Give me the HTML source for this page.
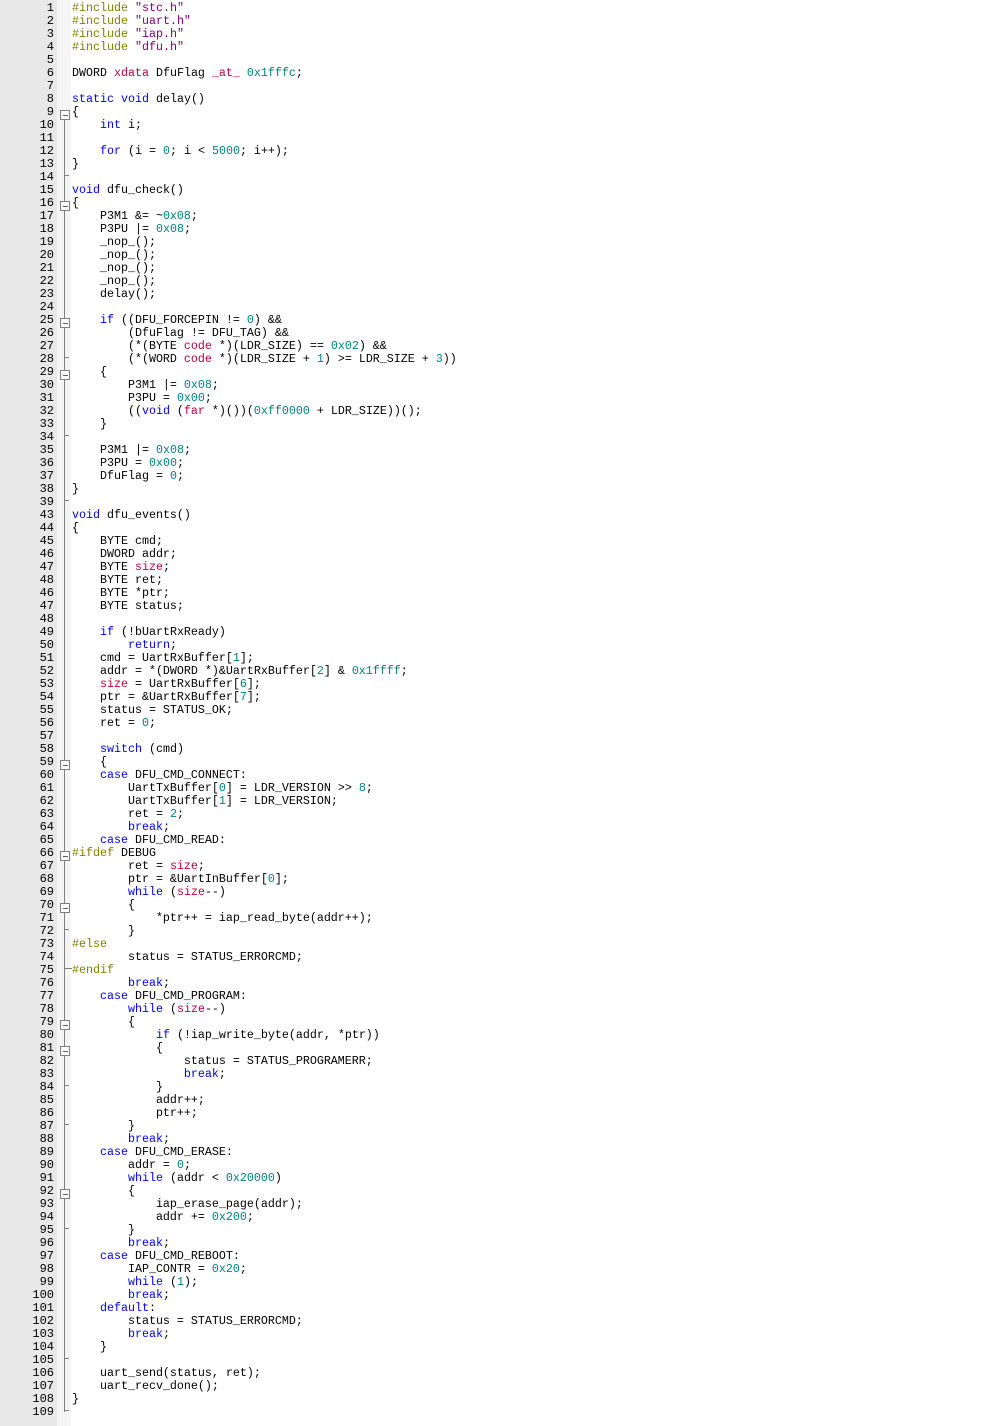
<!DOCTYPE html>
<html><head><meta charset="utf-8">
<style>
html,body{margin:0;padding:0;background:#fff;width:1003px;height:1426px;overflow:hidden}
#g{position:absolute;left:0;top:0;width:57px;height:1426px;background:#e8e8e8}
#f{position:absolute;left:57px;top:0;width:14px;height:1426px;background:#f5f5f5}
#code{position:absolute;left:0;top:2px;font-family:"Liberation Mono",monospace;font-size:11.67px;line-height:13px;color:#000}
.r{height:13px;white-space:pre;position:relative}
.ln{position:absolute;left:0;width:54px;text-align:right;color:#000;font-size:12px}
.t{position:absolute;left:72px}
.k{color:#0000ff}.n{color:#008080}.p{color:#808000}.s{color:#800080}.x{color:#c0003c}
#vl{position:absolute;left:64px;top:110px;width:1px;height:1302px;background:#808080;z-index:2}
.b{position:absolute;left:60px;width:8px;height:8px;border:1px solid #808080;background:#fff;z-index:3}
.b:after{content:"";position:absolute;left:2px;top:4px;width:5px;height:1px;background:#606060}
.tk{position:absolute;left:64px;width:5px;height:1px;background:#808080;z-index:2}
</style></head><body>
<div id="g"></div><div id="f"></div><div id="vl"></div>
<div class="b" style="top:110px"></div>
<div class="b" style="top:201px"></div>
<div class="b" style="top:318px"></div>
<div class="b" style="top:370px"></div>
<div class="b" style="top:760px"></div>
<div class="b" style="top:851px"></div>
<div class="b" style="top:903px"></div>
<div class="b" style="top:1020px"></div>
<div class="b" style="top:1046px"></div>
<div class="b" style="top:1189px"></div>
<div class="tk" style="top:175px"></div>
<div class="tk" style="top:357px"></div>
<div class="tk" style="top:435px"></div>
<div class="tk" style="top:500px"></div>
<div class="tk" style="top:929px"></div>
<div class="tk" style="top:968px;width:8px"></div>
<div class="tk" style="top:1085px"></div>
<div class="tk" style="top:1124px"></div>
<div class="tk" style="top:1228px"></div>
<div class="tk" style="top:1358px"></div>
<div class="tk" style="top:1410px"></div>
<div id="code">
<div class="r"><span class="ln">1</span><span class="t"><span class="p">#include</span> <span class="s">"stc.h"</span></span></div>
<div class="r"><span class="ln">2</span><span class="t"><span class="p">#include</span> <span class="s">"uart.h"</span></span></div>
<div class="r"><span class="ln">3</span><span class="t"><span class="p">#include</span> <span class="s">"iap.h"</span></span></div>
<div class="r"><span class="ln">4</span><span class="t"><span class="p">#include</span> <span class="s">"dfu.h"</span></span></div>
<div class="r"><span class="ln">5</span></div>
<div class="r"><span class="ln">6</span><span class="t">DWORD <span class="x">xdata</span> DfuFlag <span class="x">_at_</span> <span class="n">0x1fffc</span>;</span></div>
<div class="r"><span class="ln">7</span></div>
<div class="r"><span class="ln">8</span><span class="t"><span class="k">static</span> <span class="k">void</span> delay()</span></div>
<div class="r"><span class="ln">9</span><span class="t">{</span></div>
<div class="r"><span class="ln">10</span><span class="t">    <span class="k">int</span> i;</span></div>
<div class="r"><span class="ln">11</span></div>
<div class="r"><span class="ln">12</span><span class="t">    <span class="k">for</span> (i = <span class="n">0</span>; i &lt; <span class="n">5000</span>; i++);</span></div>
<div class="r"><span class="ln">13</span><span class="t">}</span></div>
<div class="r"><span class="ln">14</span></div>
<div class="r"><span class="ln">15</span><span class="t"><span class="k">void</span> dfu_check()</span></div>
<div class="r"><span class="ln">16</span><span class="t">{</span></div>
<div class="r"><span class="ln">17</span><span class="t">    P3M1 &amp;= ~<span class="n">0x08</span>;</span></div>
<div class="r"><span class="ln">18</span><span class="t">    P3PU |= <span class="n">0x08</span>;</span></div>
<div class="r"><span class="ln">19</span><span class="t">    _nop_();</span></div>
<div class="r"><span class="ln">20</span><span class="t">    _nop_();</span></div>
<div class="r"><span class="ln">21</span><span class="t">    _nop_();</span></div>
<div class="r"><span class="ln">22</span><span class="t">    _nop_();</span></div>
<div class="r"><span class="ln">23</span><span class="t">    delay();</span></div>
<div class="r"><span class="ln">24</span></div>
<div class="r"><span class="ln">25</span><span class="t">    <span class="k">if</span> ((DFU_FORCEPIN != <span class="n">0</span>) &amp;&amp;</span></div>
<div class="r"><span class="ln">26</span><span class="t">        (DfuFlag != DFU_TAG) &amp;&amp;</span></div>
<div class="r"><span class="ln">27</span><span class="t">        (*(BYTE <span class="x">code</span> *)(LDR_SIZE) == <span class="n">0x02</span>) &amp;&amp;</span></div>
<div class="r"><span class="ln">28</span><span class="t">        (*(WORD <span class="x">code</span> *)(LDR_SIZE + <span class="n">1</span>) &gt;= LDR_SIZE + <span class="n">3</span>))</span></div>
<div class="r"><span class="ln">29</span><span class="t">    {</span></div>
<div class="r"><span class="ln">30</span><span class="t">        P3M1 |= <span class="n">0x08</span>;</span></div>
<div class="r"><span class="ln">31</span><span class="t">        P3PU = <span class="n">0x00</span>;</span></div>
<div class="r"><span class="ln">32</span><span class="t">        ((<span class="k">void</span> (<span class="x">far</span> *)())(<span class="n">0xff0000</span> + LDR_SIZE))();</span></div>
<div class="r"><span class="ln">33</span><span class="t">    }</span></div>
<div class="r"><span class="ln">34</span></div>
<div class="r"><span class="ln">35</span><span class="t">    P3M1 |= <span class="n">0x08</span>;</span></div>
<div class="r"><span class="ln">36</span><span class="t">    P3PU = <span class="n">0x00</span>;</span></div>
<div class="r"><span class="ln">37</span><span class="t">    DfuFlag = <span class="n">0</span>;</span></div>
<div class="r"><span class="ln">38</span><span class="t">}</span></div>
<div class="r"><span class="ln">39</span></div>
<div class="r"><span class="ln">43</span><span class="t"><span class="k">void</span> dfu_events()</span></div>
<div class="r"><span class="ln">44</span><span class="t">{</span></div>
<div class="r"><span class="ln">45</span><span class="t">    BYTE cmd;</span></div>
<div class="r"><span class="ln">46</span><span class="t">    DWORD addr;</span></div>
<div class="r"><span class="ln">47</span><span class="t">    BYTE <span class="x">size</span>;</span></div>
<div class="r"><span class="ln">48</span><span class="t">    BYTE ret;</span></div>
<div class="r"><span class="ln">46</span><span class="t">    BYTE *ptr;</span></div>
<div class="r"><span class="ln">47</span><span class="t">    BYTE status;</span></div>
<div class="r"><span class="ln">48</span></div>
<div class="r"><span class="ln">49</span><span class="t">    <span class="k">if</span> (!bUartRxReady)</span></div>
<div class="r"><span class="ln">50</span><span class="t">        <span class="k">return</span>;</span></div>
<div class="r"><span class="ln">51</span><span class="t">    cmd = UartRxBuffer[<span class="n">1</span>];</span></div>
<div class="r"><span class="ln">52</span><span class="t">    addr = *(DWORD *)&amp;UartRxBuffer[<span class="n">2</span>] &amp; <span class="n">0x1ffff</span>;</span></div>
<div class="r"><span class="ln">53</span><span class="t">    <span class="x">size</span> = UartRxBuffer[<span class="n">6</span>];</span></div>
<div class="r"><span class="ln">54</span><span class="t">    ptr = &amp;UartRxBuffer[<span class="n">7</span>];</span></div>
<div class="r"><span class="ln">55</span><span class="t">    status = STATUS_OK;</span></div>
<div class="r"><span class="ln">56</span><span class="t">    ret = <span class="n">0</span>;</span></div>
<div class="r"><span class="ln">57</span></div>
<div class="r"><span class="ln">58</span><span class="t">    <span class="k">switch</span> (cmd)</span></div>
<div class="r"><span class="ln">59</span><span class="t">    {</span></div>
<div class="r"><span class="ln">60</span><span class="t">    <span class="k">case</span> DFU_CMD_CONNECT:</span></div>
<div class="r"><span class="ln">61</span><span class="t">        UartTxBuffer[<span class="n">0</span>] = LDR_VERSION &gt;&gt; <span class="n">8</span>;</span></div>
<div class="r"><span class="ln">62</span><span class="t">        UartTxBuffer[<span class="n">1</span>] = LDR_VERSION;</span></div>
<div class="r"><span class="ln">63</span><span class="t">        ret = <span class="n">2</span>;</span></div>
<div class="r"><span class="ln">64</span><span class="t">        <span class="k">break</span>;</span></div>
<div class="r"><span class="ln">65</span><span class="t">    <span class="k">case</span> DFU_CMD_READ:</span></div>
<div class="r"><span class="ln">66</span><span class="t"><span class="p">#ifdef</span> DEBUG</span></div>
<div class="r"><span class="ln">67</span><span class="t">        ret = <span class="x">size</span>;</span></div>
<div class="r"><span class="ln">68</span><span class="t">        ptr = &amp;UartInBuffer[<span class="n">0</span>];</span></div>
<div class="r"><span class="ln">69</span><span class="t">        <span class="k">while</span> (<span class="x">size</span>--)</span></div>
<div class="r"><span class="ln">70</span><span class="t">        {</span></div>
<div class="r"><span class="ln">71</span><span class="t">            *ptr++ = iap_read_byte(addr++);</span></div>
<div class="r"><span class="ln">72</span><span class="t">        }</span></div>
<div class="r"><span class="ln">73</span><span class="t"><span class="p">#else</span></span></div>
<div class="r"><span class="ln">74</span><span class="t">        status = STATUS_ERRORCMD;</span></div>
<div class="r"><span class="ln">75</span><span class="t"><span class="p">#endif</span></span></div>
<div class="r"><span class="ln">76</span><span class="t">        <span class="k">break</span>;</span></div>
<div class="r"><span class="ln">77</span><span class="t">    <span class="k">case</span> DFU_CMD_PROGRAM:</span></div>
<div class="r"><span class="ln">78</span><span class="t">        <span class="k">while</span> (<span class="x">size</span>--)</span></div>
<div class="r"><span class="ln">79</span><span class="t">        {</span></div>
<div class="r"><span class="ln">80</span><span class="t">            <span class="k">if</span> (!iap_write_byte(addr, *ptr))</span></div>
<div class="r"><span class="ln">81</span><span class="t">            {</span></div>
<div class="r"><span class="ln">82</span><span class="t">                status = STATUS_PROGRAMERR;</span></div>
<div class="r"><span class="ln">83</span><span class="t">                <span class="k">break</span>;</span></div>
<div class="r"><span class="ln">84</span><span class="t">            }</span></div>
<div class="r"><span class="ln">85</span><span class="t">            addr++;</span></div>
<div class="r"><span class="ln">86</span><span class="t">            ptr++;</span></div>
<div class="r"><span class="ln">87</span><span class="t">        }</span></div>
<div class="r"><span class="ln">88</span><span class="t">        <span class="k">break</span>;</span></div>
<div class="r"><span class="ln">89</span><span class="t">    <span class="k">case</span> DFU_CMD_ERASE:</span></div>
<div class="r"><span class="ln">90</span><span class="t">        addr = <span class="n">0</span>;</span></div>
<div class="r"><span class="ln">91</span><span class="t">        <span class="k">while</span> (addr &lt; <span class="n">0x20000</span>)</span></div>
<div class="r"><span class="ln">92</span><span class="t">        {</span></div>
<div class="r"><span class="ln">93</span><span class="t">            iap_erase_page(addr);</span></div>
<div class="r"><span class="ln">94</span><span class="t">            addr += <span class="n">0x200</span>;</span></div>
<div class="r"><span class="ln">95</span><span class="t">        }</span></div>
<div class="r"><span class="ln">96</span><span class="t">        <span class="k">break</span>;</span></div>
<div class="r"><span class="ln">97</span><span class="t">    <span class="k">case</span> DFU_CMD_REBOOT:</span></div>
<div class="r"><span class="ln">98</span><span class="t">        IAP_CONTR = <span class="n">0x20</span>;</span></div>
<div class="r"><span class="ln">99</span><span class="t">        <span class="k">while</span> (<span class="n">1</span>);</span></div>
<div class="r"><span class="ln">100</span><span class="t">        <span class="k">break</span>;</span></div>
<div class="r"><span class="ln">101</span><span class="t">    <span class="k">default</span>:</span></div>
<div class="r"><span class="ln">102</span><span class="t">        status = STATUS_ERRORCMD;</span></div>
<div class="r"><span class="ln">103</span><span class="t">        <span class="k">break</span>;</span></div>
<div class="r"><span class="ln">104</span><span class="t">    }</span></div>
<div class="r"><span class="ln">105</span></div>
<div class="r"><span class="ln">106</span><span class="t">    uart_send(status, ret);</span></div>
<div class="r"><span class="ln">107</span><span class="t">    uart_recv_done();</span></div>
<div class="r"><span class="ln">108</span><span class="t">}</span></div>
<div class="r"><span class="ln">109</span></div>
</div>
</body></html>
